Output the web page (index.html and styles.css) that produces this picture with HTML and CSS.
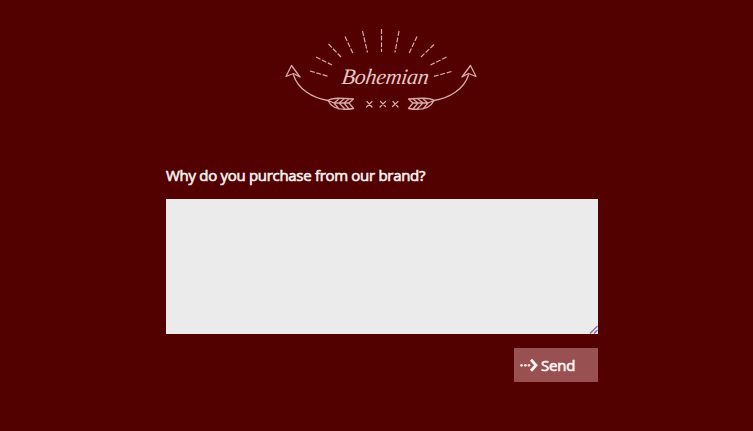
FILE: index.html
```html
<!DOCTYPE html>
<html lang="en">
<head>
<meta charset="utf-8">
<title>Bohemian</title>
<link rel="stylesheet" href="styles.css">
</head>
<body>
<main class="survey">
  <svg class="logo" viewBox="280 22 204 92" role="img" aria-label="Bohemian">
    <g class="rays">
      <path d="M310 71l19 5.5M316 57l16 8M328.500 44l12.500 13M345 36.500l8.500 18M362.500 31l5 21.500M381.500 29v23M399 31l-4 21.500M417 36.500l-8.500 18M434 44.500l-13.500 13M446.500 57l-16 8M451.500 71.500l-18 5"/>
    </g>
    <text class="wordmark" transform="translate(341 84) skewX(-8)" x="0" y="0" textLength="87" lengthAdjust="spacing">Bohemian</text>
    <g class="arrow">
      <path d="M291.500 65.500l-5.500 11 7.500-3 6.500 3.500zM293.500 75C298 89 312 98 328 100.500"/>
      <path d="M328 100.500C332 97 343 98 353.500 99L349 103l4.500 5.500C345 110 333 111 328 100.500zM328 100.500l6 2.500H349M334 103l5-4M339 103l5-4M344 103l5-4M334 103l5 6M339 103l6 6M344 103l5 6"/>
    </g>
    <g class="arrow" transform="translate(762 0) scale(-1 1)">
      <path d="M291.500 65.500l-5.500 11 7.500-3 6.500 3.500zM293.500 75C298 89 312 98 328 100.500"/>
      <path d="M328 100.500C332 97 343 98 353.500 99L349 103l4.500 5.500C345 110 333 111 328 100.500zM328 100.500l6 2.500H349M334 103l5-4M339 103l5-4M344 103l5-4M334 103l5 6M339 103l6 6M344 103l5 6"/>
    </g>
    <path class="crosses" d="M367 101.500l5 5.500M372 101.500l-5.500 5.500M380.500 101.500l5 5M385.500 101.500l-5.500 5.500M393 101.500l5 5.500M398 101.500l-5.500 5"/>
  </svg>
  <form class="form">
    <label class="question" for="answer">Why do you purchase from our brand?</label>
    <div class="field">
      <textarea id="answer" class="answer"></textarea>
      <svg class="grip" viewBox="0 0 9 9"><path d="M1 8.500L8.500 1M5 8.500L8.500 5"/></svg>
    </div>
    <button class="send" type="button">
      <svg class="send-icon" viewBox="0 0 18 14"><g class="dots"><circle cx="1.500" cy="7.300" r="1.400"/><circle cx="5.300" cy="7.300" r="1.400"/><circle cx="9" cy="7.300" r="1.400"/></g><path class="chevron" d="M11 1.800l5 5.500-5 5.500"/></svg>
      <span>Send</span>
    </button>
  </form>
</main>
</body>
</html>
```
FILE: styles.css
```css
body {
  margin: 0;
  background: #520000;
  color: #f8f2f2;
  font-family: "Open Sans", "Noto Sans", sans-serif;
}

.survey {
  box-sizing: border-box;
  width: 432px;
  min-height: 431px;
  margin-left: 166px;
  padding-top: 22px;
}

.logo {
  display: block;
  width: 204px;
  height: 92px;
  margin-left: 114px;
  fill: none;
  stroke: #d8a9a9;
  stroke-linecap: round;
  stroke-linejoin: round;
}

.rays {
  stroke-width: 1.2;
  stroke-dasharray: 5 1.6;
  stroke-linecap: butt;
}

.arrow {
  stroke-width: 1.3;
}

.crosses {
  stroke-width: 1.2;
}

.wordmark {
  fill: #e6c6c6;
  stroke: none;
  font: italic 22px "Liberation Serif", serif;
}

.form {
  display: flex;
  flex-direction: column;
  margin-top: 50px;
}

.question {
  height: 22px;
  margin-bottom: 13px;
  font-size: 15px;
  line-height: 22px;
  letter-spacing: -0.3px;
  white-space: nowrap;
  -webkit-text-stroke: 0.6px #f8f2f2;
}

.field {
  position: relative;
  height: 135px;
}

.answer {
  display: block;
  box-sizing: border-box;
  width: 100%;
  height: 100%;
  padding: 8px;
  border: 0;
  background: #ebebeb;
  resize: none;
}

.grip {
  position: absolute;
  right: 0;
  bottom: 0;
  width: 9px;
  height: 9px;
  fill: none;
  stroke: #8560a8;
  stroke-width: 1.1;
}

.send {
  display: flex;
  align-items: center;
  align-self: flex-end;
  gap: 3px;
  width: 84px;
  height: 34px;
  margin-top: 14px;
  padding: 0 0 0 6px;
  border: 0;
  background: #985050;
  color: #fff5f5;
  font: 15px "Open Sans", "Noto Sans", sans-serif;
  letter-spacing: -0.2px;
  -webkit-text-stroke: 0.6px #fff5f5;
}

.send-icon {
  width: 18px;
  height: 14px;
}

.dots {
  fill: #f5e5e5;
}

.chevron {
  fill: none;
  stroke: #fff5f5;
  stroke-width: 2.8;
}
```
